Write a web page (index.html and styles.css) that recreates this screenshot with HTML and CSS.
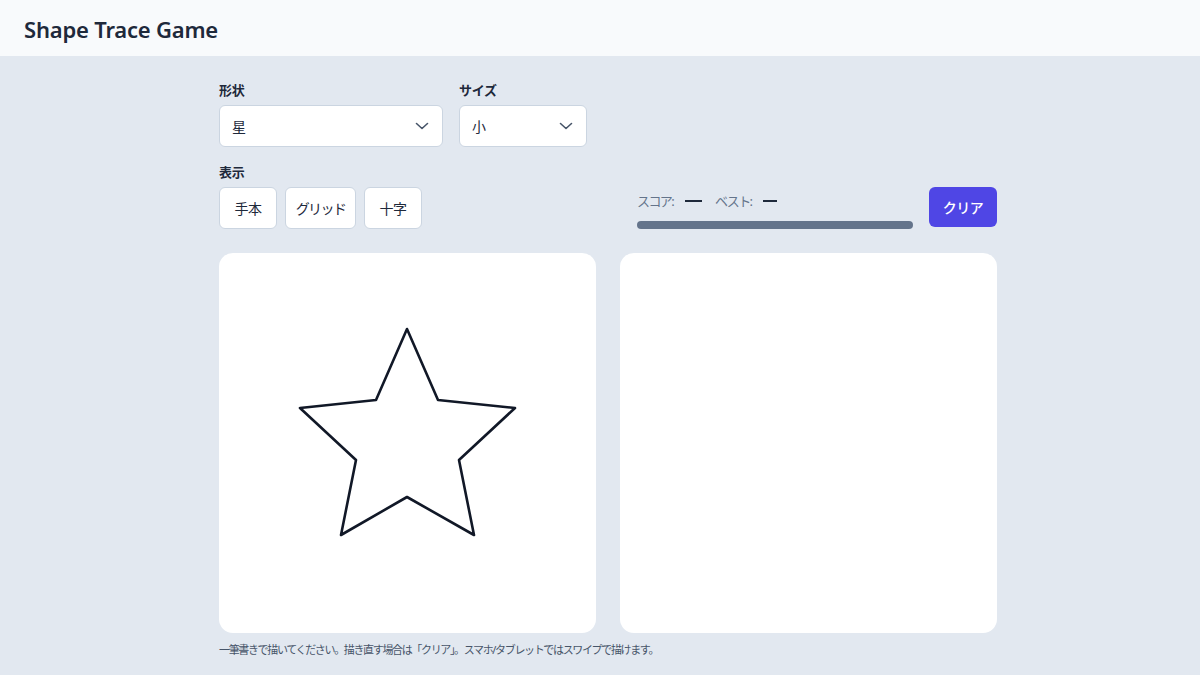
FILE: index.html
```html
<!DOCTYPE html>
<html lang="ja">
<head>
<meta charset="utf-8">
<title>Shape Trace Game</title>
<link rel="stylesheet" href="styles.css">
</head>
<body>
<header class="topbar"><h1 class="title">Shape Trace Game</h1></header>
<main class="main">
  <div class="row row-selects">
    <div class="field">
      <div class="label">形状</div>
      <div class="select select-wide"><span>星</span><svg class="chev" width="14" height="8" viewBox="0 0 14 8"><path d="M1.5 1.5 L7 6.5 L12.5 1.5" fill="none" stroke="#475569" stroke-width="1.6" stroke-linecap="round" stroke-linejoin="round"/></svg></div>
    </div>
    <div class="field">
      <div class="label">サイズ</div>
      <div class="select select-narrow"><span>小</span><svg class="chev" width="14" height="8" viewBox="0 0 14 8"><path d="M1.5 1.5 L7 6.5 L12.5 1.5" fill="none" stroke="#475569" stroke-width="1.6" stroke-linecap="round" stroke-linejoin="round"/></svg></div>
    </div>
  </div>
  <div class="row row-controls">
    <div class="field">
      <div class="label">表示</div>
      <div class="toggles">
        <button class="toggle t-model">手本</button>
        <button class="toggle t-grid">グリッド</button>
        <button class="toggle t-cross">十字</button>
      </div>
    </div>
    <div class="right">
      <div class="scorebox">
        <div class="scoretext"><span>スコア:</span><span class="dash"></span><span class="best">ベスト:</span><span class="dash2"></span></div>
        <div class="bar"></div>
      </div>
      <button class="clear">クリア</button>
    </div>
  </div>
  <div class="boards">
    <div class="board">
      <svg width="377" height="380" viewBox="0 0 377 380">
        <polygon points="188,76 219,147 296,155 240,207 255,282 188,244 122,282 137,207 81,155 157,147" fill="none" stroke="#111827" stroke-width="2.6" stroke-linejoin="round"/>
      </svg>
    </div>
    <div class="board"></div>
  </div>
  <p class="note">一筆書きで描いてください。描き直す場合は「クリア」。スマホ/タブレットではスワイプで描けます。</p>
</main>
</body>
</html>
```
FILE: styles.css
```css
* { box-sizing: border-box; }
html, body { margin: 0; padding: 0; }
body {
  background: #e2e8f0;
  font-family: "Noto Sans", "Noto Sans CJK JP", sans-serif;
  color: #1e293b;
  width: 1200px;
  height: 675px;
  overflow: hidden;
}
.topbar {
  height: 56px;
  background: #f8fafc;
  display: flex;
  align-items: center;
  padding-left: 24px;
  padding-top: 2px;
}
.title {
  margin: 0;
  font-size: 22px;
  font-weight: 600;
  color: #1e293b;
  letter-spacing: -0.2px;
}
.main {
  width: 778px;
  margin-left: 219px;
  padding-top: 25px;
}
.row { display: flex; }
.row-selects { gap: 16px; }
.field { display: flex; flex-direction: column; }
.label {
  font-size: 13px;
  font-weight: 700;
  line-height: 18px;
  margin-bottom: 6px;
  color: #1e293b;
  letter-spacing: -0.3px;
}
.select {
  height: 42px;
  background: #fff;
  border: 1px solid #cbd5e1;
  border-radius: 6px;
  display: flex;
  align-items: center;
  justify-content: space-between;
  padding: 0 13px 0 12px;
  font-size: 14px;
  color: #1e293b;
}
.select-wide { width: 224px; }
.select-narrow { width: 128px; }
.row-controls {
  margin-top: 16px;
  justify-content: space-between;
  align-items: flex-end;
}
.toggles { display: flex; gap: 8px; }
.toggle {
  height: 42px;
  background: #fff;
  border: 1px solid #cbd5e1;
  border-radius: 6px;
  padding: 0;
  font-family: inherit;
  font-size: 14px;
  color: #1e293b;
  letter-spacing: -0.5px;
}
.t-model { width: 58px; }
.t-grid { width: 71px; letter-spacing: -1.6px; }
.t-cross { width: 58px; }
.right { display: flex; gap: 16px; align-items: flex-start; height: 42px; }
.scorebox {
  width: 276px;
  height: 42px;
  display: flex;
  flex-direction: column;
  padding-top: 4px;
}
.scoretext {
  font-size: 13px;
  color: #64748b;
  line-height: 20px;
  height: 20px;
  display: flex;
  align-items: center;
  letter-spacing: -1.6px;
}
.dash { display: inline-block; width: 17px; height: 2px; background: #1e293b; margin-left: 12px; }
.best { margin-left: 13px; }
.dash2 { display: inline-block; width: 14px; height: 1.5px; background: #1e293b; margin-left: 12px; }
.bar {
  margin-top: 10px;
  height: 8px;
  border-radius: 4px;
  background: #64748b;
}
.clear {
  width: 68px;
  height: 40px;
  background: #4f46e5;
  color: #fff;
  border: none;
  border-radius: 6px;
  font-family: inherit;
  font-size: 14px;
  font-weight: 500;
  letter-spacing: -0.5px;
}
.boards {
  display: flex;
  gap: 24px;
  margin-top: 24px;
}
.board {
  width: 377px;
  height: 380px;
  background: #fff;
  border-radius: 14px;
  overflow: hidden;
}
.board svg { display: block; }
.note {
  margin: 9px 0 0;
  font-size: 11px;
  color: #475569;
  line-height: 16px;
  letter-spacing: -1.35px;
}
```
